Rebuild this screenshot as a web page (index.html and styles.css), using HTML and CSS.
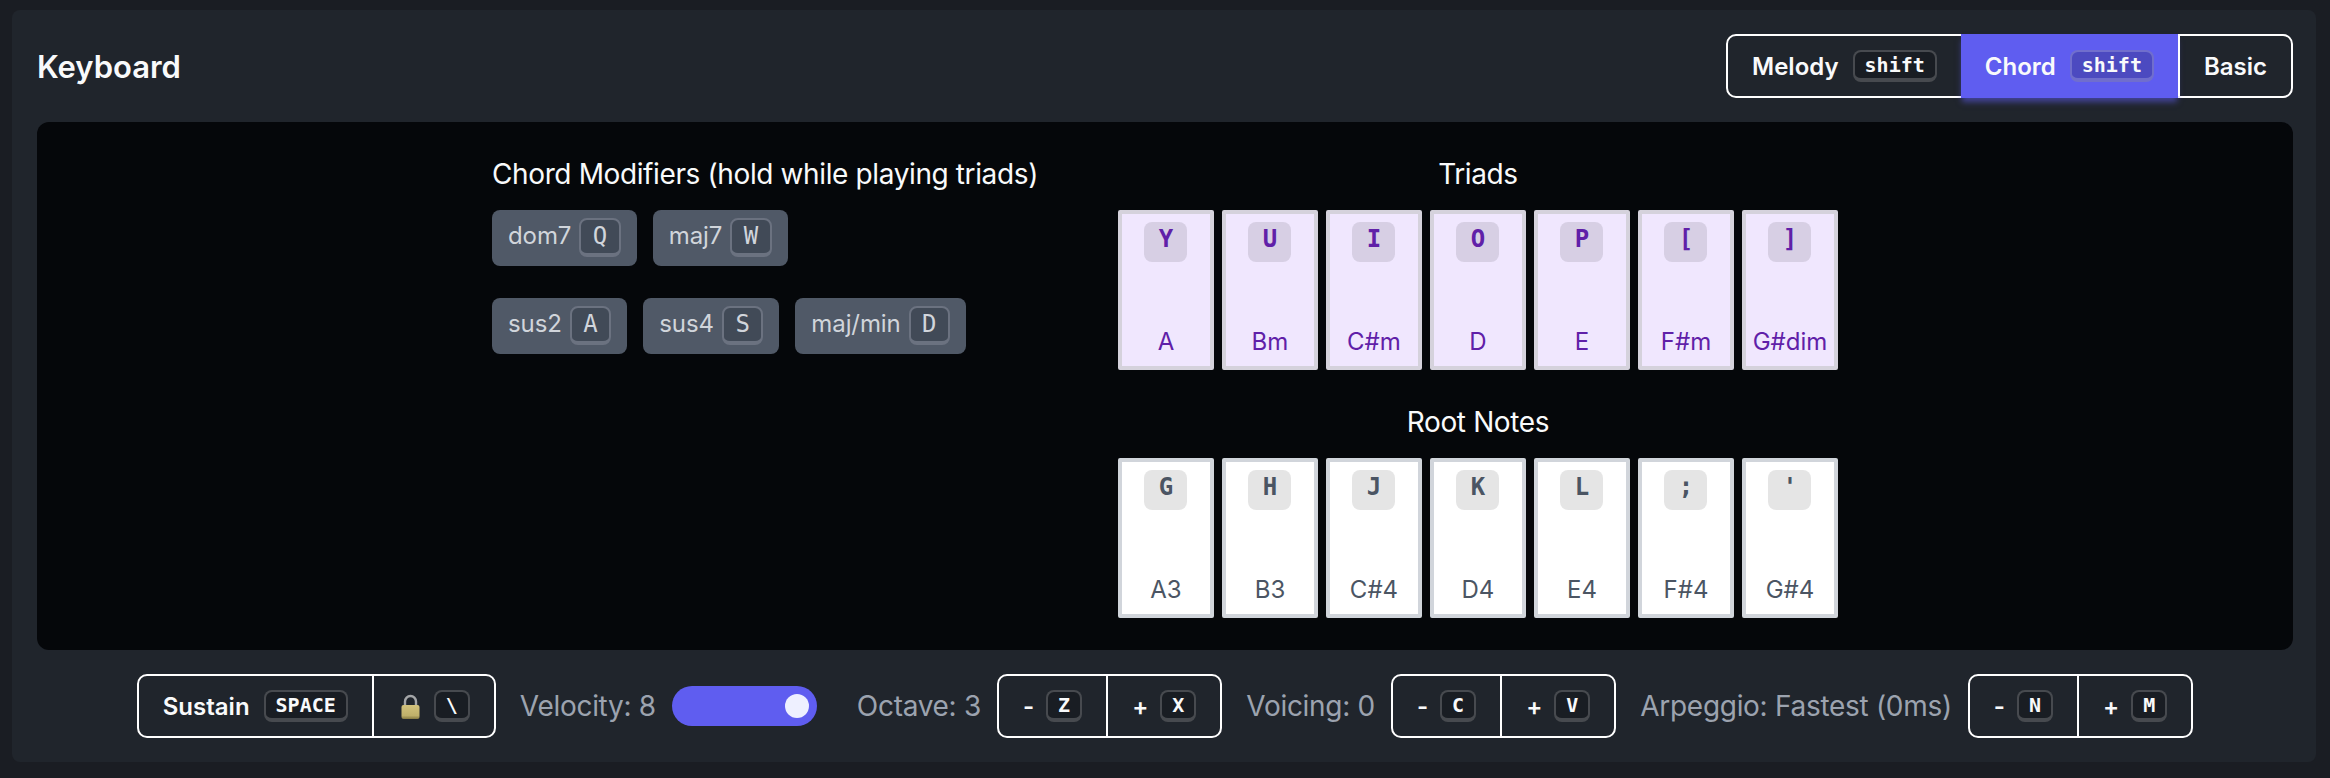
FILE: index.html
```html
<!DOCTYPE html>
<html lang="en">

<head>
    <meta charset="UTF-8">
    <meta name="viewport" content="width=device-width, initial-scale=1.0">
    <title>Keyboard</title>
    <link rel="stylesheet" href="styles.css">
</head>

<body>
    <div class="panel">
        <div class="header">
            <h1>Keyboard</h1>
            <div class="btn-group">
                <button class="btn">Melody <kbd>shift</kbd></button>
                <button class="btn active">Chord <kbd>shift</kbd></button>
                <button class="btn">Basic</button>
            </div>
        </div>

        <div class="stage">
            <div class="modifiers">
                <h2>Chord Modifiers (hold while playing triads)</h2>
                <div class="chip-row">
                    <span class="chip">dom7 <kbd>Q</kbd></span>
                    <span class="chip">maj7 <kbd>W</kbd></span>
                </div>
                <div class="chip-row">
                    <span class="chip">sus2 <kbd>A</kbd></span>
                    <span class="chip">sus4 <kbd>S</kbd></span>
                    <span class="chip">maj/min <kbd>D</kbd></span>
                </div>
            </div>

            <div class="keys">
                <h2 class="center">Triads</h2>
                <div class="key-row">
                    <div class="key triad"><span class="cap">Y</span><span>A</span></div>
                    <div class="key triad"><span class="cap">U</span><span>Bm</span></div>
                    <div class="key triad"><span class="cap">I</span><span>C#m</span></div>
                    <div class="key triad"><span class="cap">O</span><span>D</span></div>
                    <div class="key triad"><span class="cap">P</span><span>E</span></div>
                    <div class="key triad"><span class="cap">[</span><span>F#m</span></div>
                    <div class="key triad"><span class="cap">]</span><span>G#dim</span></div>
                </div>
                <h2 class="center second">Root Notes</h2>
                <div class="key-row">
                    <div class="key"><span class="cap">G</span><span>A3</span></div>
                    <div class="key"><span class="cap">H</span><span>B3</span></div>
                    <div class="key"><span class="cap">J</span><span>C#4</span></div>
                    <div class="key"><span class="cap">K</span><span>D4</span></div>
                    <div class="key"><span class="cap">L</span><span>E4</span></div>
                    <div class="key"><span class="cap">;</span><span>F#4</span></div>
                    <div class="key"><span class="cap">'</span><span>G#4</span></div>
                </div>
            </div>
        </div>

        <div class="controls">
            <div class="btn-group">
                <button class="btn">Sustain <kbd>SPACE</kbd></button>
                <button class="btn lock-btn">
                    <svg class="lock" viewBox="0 0 19 25" width="19" height="25">
                        <defs>
                            <linearGradient id="lock-body" x1="0" y1="0" x2="0" y2="1">
                                <stop offset="0" stop-color="#d2c27c"/>
                                <stop offset="0.75" stop-color="#bfb06a"/>
                                <stop offset="1" stop-color="#857a42"/>
                            </linearGradient>
                        </defs>
                        <path d="M4 12V7.5a5.5 5.5 0 0 1 11 0V12" fill="none" stroke="#a4a6a8" stroke-width="2.4"/>
                        <rect x="0.5" y="11" width="18" height="14" rx="2" fill="url(#lock-body)"/>
                    </svg>
                    <kbd>\</kbd>
                </button>
            </div>
            <div class="control">
                <span class="label">Velocity: 8</span>
                <span class="slider"><span class="thumb"></span></span>
            </div>
            <div class="control tight">
                <span class="label">Octave: 3</span>
                <div class="btn-group">
                    <button class="btn step">- <kbd>Z</kbd></button>
                    <button class="btn step">+ <kbd>X</kbd></button>
                </div>
            </div>
            <div class="control tight">
                <span class="label">Voicing: 0</span>
                <div class="btn-group">
                    <button class="btn step">- <kbd>C</kbd></button>
                    <button class="btn step">+ <kbd>V</kbd></button>
                </div>
            </div>
            <div class="control tight">
                <span class="label">Arpeggio: Fastest (0ms)</span>
                <div class="btn-group">
                    <button class="btn step">- <kbd>N</kbd></button>
                    <button class="btn step">+ <kbd>M</kbd></button>
                </div>
            </div>
        </div>
    </div>
</body>

</html>
```

FILE: styles.css
```css
* {
    box-sizing: border-box;
}

body {
    font-family: Inter, "Noto Sans", sans-serif;
    background-color: #1a1d23;
    margin: 0;
    padding: 10px 14px 16px 12px;
    height: 778px;
    overflow: hidden;
}

.panel {
    background: #20252c;
    border-radius: 8px;
    padding: 24px 23px 24px 25px;
    height: 752px;
}

.header {
    display: flex;
    justify-content: space-between;
    align-items: center;
    height: 64px;
}

h1 {
    margin: 0;
    font-size: 31px;
    font-weight: 600;
    color: #f9fafb;
}

h2 {
    margin: 0 0 16px;
    font-size: 28px;
    line-height: 40px;
    letter-spacing: -0.38px;
    font-weight: 400;
    color: #f9fafb;
}

.center {
    text-align: center;
}

.second {
    margin-top: 32px;
}

kbd {
    display: inline-block;
    font-family: "DejaVu Sans Mono", monospace;
    font-size: 20px;
    line-height: 26px;
    font-weight: 700;
    padding: 0 10px;
    color: #f9fafb;
    background: rgba(0, 0, 0, 0.2);
    border: 2px solid rgba(255, 255, 255, 0.2);
    border-bottom-width: 4px;
    border-radius: 8px;
}

.btn-group {
    display: flex;
    height: 64px;
    border: 2px solid #fff;
    border-radius: 10px;
}

.btn {
    display: flex;
    align-items: center;
    gap: 14px;
    padding: 0 24px;
    background: none;
    border: none;
    border-left: 2px solid #fff;
    color: #f9fafb;
    font-family: inherit;
    font-size: 24px;
    font-weight: 600;
    white-space: nowrap;
}

.btn:first-child {
    border-left: none;
}

.btn.active {
    background: #5f5df0;
    margin: -2px 0;
    border-left: none;
    box-shadow: 0 5px 6px -1px rgba(95, 93, 240, 0.55);
}

.stage {
    display: flex;
    justify-content: center;
    gap: 80px;
    margin-top: 24px;
    padding: 32px;
    height: 528px;
    background: #05070a;
    border-radius: 12px;
}

.chip-row {
    display: flex;
    gap: 16px;
    margin-bottom: 32px;
}

.chip {
    display: flex;
    align-items: baseline;
    gap: 8px;
    height: 56px;
    padding: 8px 16px 0;
    background: #505967;
    border-radius: 8px;
    color: #d1d5db;
    font-size: 24px;
    letter-spacing: -0.1px;
}

.chip kbd {
    font-size: 24px;
    line-height: 33px;
    font-weight: 400;
    padding: 0 11.5px;
    letter-spacing: 0;
    color: #d1d5db;
    background: #414a57;
    border-color: #6b7280;
}

.key-row {
    display: flex;
    gap: 8px;
}

.key {
    display: flex;
    flex-direction: column;
    align-items: center;
    justify-content: space-between;
    width: 96px;
    height: 160px;
    padding: 8px 0;
    background: #fff;
    border: 4px solid #d1d5db;
    border-radius: 2px;
    color: #4b5563;
    font-size: 24px;
    line-height: 32px;
}

.cap {
    width: 43px;
    height: 40px;
    font-family: "DejaVu Sans Mono", monospace;
    font-size: 24px;
    line-height: 34px;
    font-weight: 700;
    text-align: center;
    background: rgba(0, 0, 0, 0.1);
    border-radius: 8px;
}

.key.triad {
    background: #f0e7fe;
    border-color: #d5d2dc;
    color: #6020a8;
}

.controls {
    display: flex;
    justify-content: center;
    align-items: center;
    gap: 24px;
    margin-top: 24px;
}

.control {
    display: flex;
    align-items: center;
    gap: 16px;
}

.label {
    color: #9ca3af;
    font-size: 28px;
    letter-spacing: -0.3px;
    white-space: nowrap;
}

.slider {
    display: flex;
    justify-content: flex-end;
    align-items: center;
    width: 145px;
    height: 40px;
    padding-right: 8px;
    margin-right: 16px;
    background: #5f5df0;
    border-radius: 20px;
}

.thumb {
    width: 24px;
    height: 24px;
    background: #eef0ff;
    border-radius: 50%;
}

.lock-btn {
    gap: 11px;
}

.lock {
    margin: 0 3px;
}

.tight {
    gap: 16px;
}

.step {
    gap: 12px;
}
```
